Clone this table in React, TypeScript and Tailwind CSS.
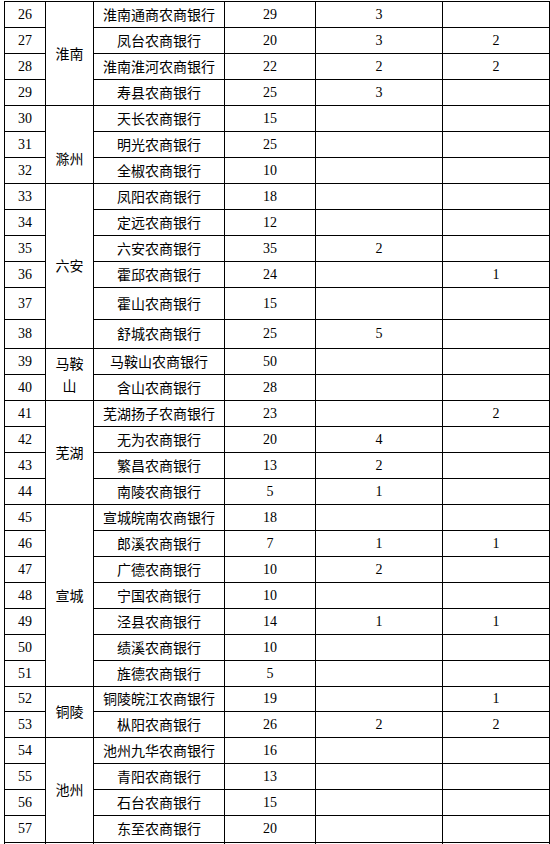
import React from "react";

type Row = [number, string, string, string, string];

const rows: Row[] = [
  [26, "淮南通商农商银行", "29", "3", ""],
  [27, "凤台农商银行", "20", "3", "2"],
  [28, "淮南淮河农商银行", "22", "2", "2"],
  [29, "寿县农商银行", "25", "3", ""],
  [30, "天长农商银行", "15", "", ""],
  [31, "明光农商银行", "25", "", ""],
  [32, "全椒农商银行", "10", "", ""],
  [33, "凤阳农商银行", "18", "", ""],
  [34, "定远农商银行", "12", "", ""],
  [35, "六安农商银行", "35", "2", ""],
  [36, "霍邱农商银行", "24", "", "1"],
  [37, "霍山农商银行", "15", "", ""],
  [38, "舒城农商银行", "25", "5", ""],
  [39, "马鞍山农商银行", "50", "", ""],
  [40, "含山农商银行", "28", "", ""],
  [41, "芜湖扬子农商银行", "23", "", "2"],
  [42, "无为农商银行", "20", "4", ""],
  [43, "繁昌农商银行", "13", "2", ""],
  [44, "南陵农商银行", "5", "1", ""],
  [45, "宣城皖南农商银行", "18", "", ""],
  [46, "郎溪农商银行", "7", "1", "1"],
  [47, "广德农商银行", "10", "2", ""],
  [48, "宁国农商银行", "10", "", ""],
  [49, "泾县农商银行", "14", "1", "1"],
  [50, "绩溪农商银行", "10", "", ""],
  [51, "旌德农商银行", "5", "", ""],
  [52, "铜陵皖江农商银行", "19", "", "1"],
  [53, "枞阳农商银行", "26", "2", "2"],
  [54, "池州九华农商银行", "16", "", ""],
  [55, "青阳农商银行", "13", "", ""],
  [56, "石台农商银行", "15", "", ""],
  [57, "东至农商银行", "20", "", ""],
];

const cn = "font-['Noto_Sans_CJK_SC',sans-serif] text-[14px]";
const num = "font-['Liberation_Serif','Noto_Sans_CJK_SC',serif] text-[14px]";
const cell = "bg-white flex items-center justify-center text-black";

function City({ start }: { start: number }) {
  switch (start) {
    case 26:
      return <div className={`${cell} ${cn} row-span-4 leading-none pb-[2px]`}>淮南</div>;
    case 30:
      return <div className={`${cell} ${cn} row-span-3 leading-none pt-[26px]`}>滁州</div>;
    case 33:
      return <div className={`${cell} ${cn} row-span-6 leading-none pb-[2px]`}>六安</div>;
    case 39:
      return (
        <div className={`${cell} ${cn} row-span-2 flex-col gap-[4px] pb-[2px]`}>
          <span className="block leading-[18px]">马鞍</span>
          <span className="block leading-[18px]">山</span>
        </div>
      );
    case 41:
      return <div className={`${cell} ${cn} row-span-4 leading-none pb-[2px]`}>芜湖</div>;
    case 45:
      return <div className={`${cell} ${cn} row-span-7 leading-none pb-[2px]`}>宣城</div>;
    case 52:
      return <div className={`${cell} ${cn} row-span-2 leading-none pb-[2px]`}>铜陵</div>;
    case 54:
      return <div className={`${cell} ${cn} row-span-4 leading-none pb-[2px]`}>池州</div>;
    default:
      return null;
  }
}

export default function App() {
  return (
    <div className="min-h-[844px] w-[550px] bg-white overflow-hidden">
      <div className="ml-[4px] mt-px w-[546px] bg-black p-px grid gap-px grid-cols-[40px_47px_130px_90px_126px_106px] grid-rows-[repeat(11,25px)_31px_28px_repeat(13,25px)_24px_repeat(4,25px)_26px_25px]">
        {rows.map(([n, bank, a, b, c]) => (
          <React.Fragment key={n}>
            <div className={`${cell} ${num} leading-none`}>{n}</div>
            <City start={n} />
            <div className={`${cell} ${cn} leading-none pb-[2px]`}>{bank}</div>
            <div className={`${cell} ${num} leading-none`}>{a}</div>
            <div className={`${cell} ${num} leading-none`}>{b}</div>
            <div className={`${cell} ${num} leading-none`}>{c}</div>
          </React.Fragment>
        ))}
        <div className={cell}></div>
        <div className={cell}></div>
        <div className={cell}></div>
        <div className={cell}></div>
        <div className={cell}></div>
        <div className={cell}></div>
      </div>
    </div>
  );
}
